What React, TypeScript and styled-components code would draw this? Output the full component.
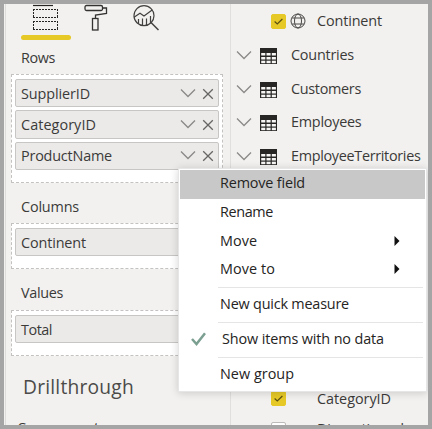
import React from 'react';
import styled, { createGlobalStyle } from 'styled-components';

const Global = createGlobalStyle`
  * { box-sizing: border-box; }
  body { margin: 0; overflow: hidden; background: #a5a5a5; }
  svg { display: block; flex: none; }
`;

const Frame = styled.div`
  position: relative;
  width: 432px;
  height: 429px;
  border: 4px solid #a5a5a5;
  background: #f2f1ef;
  color: #3b3a39;
  font: 14.4px/20px 'Open Sans', 'Noto Sans', sans-serif;
  overflow: hidden;
`;
const Panels = styled.div`
  display: grid;
  grid-template-columns: 226px 198px;
  height: 421px;
  overflow: hidden;
`;
const FormatPane = styled.section`
  border-left: 1px solid #f2f1ef;
  box-shadow: inset 1px 0 #dddcdb;
  padding-left: 6px;
  overflow: hidden;
`;
const FieldsPane = styled.section`
  border-left: 1px solid #e0dfdd;
  overflow: hidden;
`;
const Label = styled.span<{ $w: number; $size?: number }>`
  display: block;
  width: ${p => p.$w}px;
  font-size: ${p => p.$size ?? 14.4}px;
  white-space: nowrap;
`;
const TabBar = styled.div`
  display: flex;
  gap: 14px;
  height: 42px;
  padding-left: 10px;
`;
const Tab = styled.div<{ $active?: boolean }>`
  width: 36px;
  height: 36px;
  display: flex;
  justify-content: center;
  position: relative;
  &:first-child { width: 50px; margin-right: -7px; }
  &::after {
    content: '';
    display: ${p => (p.$active ? 'block' : 'none')};
    position: absolute;
    left: 0;
    bottom: 0;
    width: 50px;
    height: 5px;
    border-radius: 3px;
    background: #e6c927;
  }
`;
const Heading = styled.div<{ $h: number; $top: number }>`
  height: ${p => p.$h}px;
  padding: ${p => p.$top}px 0 0 10px;
`;
const Well = styled.div<{ $h: number }>`
  display: flex;
  flex-direction: column;
  gap: 3px;
  width: 212px;
  height: ${p => p.$h}px;
  padding: 4px 3px;
  border: 1px dashed #c3c2c1;
  background: #fff;
`;
const Pill = styled.div`
  display: flex;
  align-items: center;
  height: 28.4px;
  flex: none;
  padding: 1px 4px 0 5px;
  border: 1px solid #c8c6c4;
  border-radius: 2px;
  background: #ebeae9;
`;
const PillActions = styled.div`
  display: flex;
  gap: 6px;
  margin-left: auto;
`;
const Drill = styled.div`
  padding: 18px 0 0 12px;
  height: 57px;
  color: #4b4a49;
  font-weight: 500;
  line-height: 26px;
`;
const CrossReport = styled.div`
  padding: 5px 0 0 6px;
`;
const TableRow = styled.div`
  display: flex;
  align-items: center;
  height: 33.7px;
  padding-left: 5px;
  svg { opacity: 0.99; }
`;
const TableGlyph = styled.div`
  margin: 2px 14px 0 8px;
`;
const FieldRow = styled.div<{ $h: number }>`
  display: flex;
  align-items: center;
  height: ${p => p.$h}px;
  padding-left: 40px;
`;
const Check = styled.div<{ $on?: boolean }>`
  display: grid;
  place-items: center;
  width: 15px;
  height: 15px;
  border-radius: 2px;
  background: ${p => (p.$on ? '#e6c927' : '#fff')};
  border: 1px solid ${p => (p.$on ? '#e6c927' : '#bdbbb9')};
`;
const KindSlot = styled.div`
  width: 31px;
  padding-left: 4px;
`;
const HiddenFields = styled.div`
  height: 209px;
`;
const Menu = styled.div`
  position: absolute;
  left: 174px;
  top: 164px;
  width: 249px;
  height: 224px;
  padding: 1px;
  border: 1px solid #e6e6e6;
  background: #fff;
  color: #252423;
  box-shadow: 0 1px 8px rgba(0, 0, 0, 0.17);
`;
const MenuItem = styled.div<{ $active?: boolean; $h?: number; $indent?: number }>`
  display: flex;
  align-items: center;
  height: ${p => p.$h ?? 28.7}px;
  padding: 0 25px 2px ${p => p.$indent ?? 40}px;
  background: ${p => (p.$active ? '#c8c8c8' : 'transparent')};
  svg { margin-left: auto; }
`;
const Divider = styled.div`
  height: 1px;
  margin: 2px 2px 2px 38px;
  background: #e5e5e5;
`;
const TickSlot = styled.div`
  width: 31px;
  svg { margin: 0; }
`;

/* Fits a run of text to its design width regardless of the face's metrics. */
function Text({ children, w, size }: { children: string; w: number; size?: number }) {
  const ref = React.useRef<HTMLSpanElement>(null);
  const [spacing, setSpacing] = React.useState(0);
  React.useLayoutEffect(() => {
    const range = document.createRange();
    range.selectNodeContents(ref.current!);
    setSpacing((w - range.getBoundingClientRect().width) / children.length);
  }, [children, w, size]);
  return <Label ref={ref} $w={w} $size={size} style={{ letterSpacing: spacing }}>{children}</Label>;
}

const Chevron = () => (
  <svg width="16" height="10" viewBox="0 0 16 10" fill="none" stroke="#8a8987" strokeWidth="1.3">
    <path d="M1 1.5 8 8.5 15 1.5" />
  </svg>
);
const Cross = () => (
  <svg width="12" height="12" viewBox="0 0 12 12" fill="none" stroke="#666564" strokeWidth="1.3">
    <path d="M1.2 1.2 10.8 10.8M10.8 1.2 1.2 10.8" />
  </svg>
);
const FieldsIcon = () => (
  <svg width="28" height="30" viewBox="0 0 28 30" fill="none" stroke="#252423">
    <path d="M1 1.5H21" strokeWidth="1.2" />
    <path d="M1 5.5H26M1 13.5H26M1 17.5H26M1 25.5H26" strokeDasharray="2 1" />
    <path d="M1.5 5V14M25.5 5V14M1.5 17V26M25.5 17V26" strokeDasharray="2 1" />
  </svg>
);
const RollerIcon = () => (
  <svg width="26" height="30" viewBox="0 0 26 30" fill="none" stroke="#333231" strokeWidth="1.3">
    <rect x="2" y="1.5" width="17.5" height="5" rx="1.5" />
    <path d="M19.5 4H23.5V9.5L12.5 11V14.5" />
    <rect x="9.5" y="14.5" width="5.5" height="11.5" />
  </svg>
);
const AnalyticsIcon = () => (
  <svg width="28" height="30" viewBox="0 0 28 30" fill="none" stroke="#42413f" strokeWidth="1.2">
    <circle cx="12" cy="11.7" r="10" />
    <path d="M19.2 18.8 26.5 26" strokeWidth="1.5" />
    <path d="M2 13.2 8 9.2 12 12 20.5 5.8M6.5 20V15M10.5 21.5V14.5M14.5 21.5V14.5M18.5 19V12" />
  </svg>
);
const TableIcon = () => (
  <svg width="17" height="16" viewBox="0 0 17 16">
    <rect width="17" height="16" fill="#252423" />
    <g fill="#f8f7f6">
      {[5, 9, 12.7].flatMap(y => [1.2, 6.5, 11.8].map(x => <rect key={`${x}-${y}`} x={x} y={y} width="4.1" height="2.5" />))}
    </g>
  </svg>
);
const GlobeIcon = () => (
  <svg width="16" height="16" viewBox="0 0 16 16" fill="none" stroke="#4a4948" strokeWidth="1">
    <circle cx="8" cy="8" r="7" />
    <ellipse cx="8" cy="8" rx="3.5" ry="7" />
    <path d="M1.8 5H14.2M1.8 11H14.2" />
  </svg>
);
const SmallTick = () => (
  <svg width="9" height="7" viewBox="0 0 9 7" fill="none" stroke="#5c5010" strokeWidth="1.2">
    <path d="M.6 3.5 3.3 6 8.4 1" />
  </svg>
);
const MenuTick = () => (
  <svg width="15" height="14" viewBox="0 0 15 14" fill="none" stroke="#7b9f91" strokeWidth="2.5">
    <path d="M1 7 5.5 12 14 1.2" />
  </svg>
);
const SubmenuArrow = () => (
  <svg width="6" height="10" viewBox="0 0 6 10" fill="#111"><path d="M.5 0 5.5 5 .5 10Z" /></svg>
);

function Field({ name, w }: { name: string; w: number }) {
  return (
    <Pill>
      <Text w={w}>{name}</Text>
      <PillActions><Chevron /><Cross /></PillActions>
    </Pill>
  );
}

const tables: [string, number][] = [['Countries', 63], ['Customers', 70], ['Employees', 70.5], ['EmployeeTerritories', 129.5]];

export default function App() {
  return (
    <Frame>
      <Global />
      <Panels>
        <FormatPane>
          <TabBar>
            <Tab $active><FieldsIcon /></Tab>
            <Tab><RollerIcon /></Tab>
            <Tab><AnalyticsIcon /></Tab>
          </TabBar>
          <Heading $h={28} $top={2}><Text w={34}>Rows</Text></Heading>
          <Well $h={109}>
            <Field name="SupplierID" w={69} />
            <Field name="CategoryID" w={75} />
            <Field name="ProductName" w={91} />
          </Well>
          <Heading $h={40} $top={14}><Text w={58}>Columns</Text></Heading>
          <Well $h={46}><Field name="Continent" w={65} /></Well>
          <Heading $h={41} $top={14}><Text w={42}>Values</Text></Heading>
          <Well $h={46}><Field name="Total" w={31} /></Well>
          <Drill><Text w={111} size={19.2}>Drillthrough</Text></Drill>
          <CrossReport><Text w={82}>Cross-report</Text></CrossReport>
        </FormatPane>
        <FieldsPane>
          <FieldRow $h={34}>
            <Check $on><SmallTick /></Check>
            <KindSlot><GlobeIcon /></KindSlot>
            <Text w={65}>Continent</Text>
          </FieldRow>
          {tables.map(([name, w]) => (
            <TableRow key={name}>
              <Chevron />
              <TableGlyph><TableIcon /></TableGlyph>
              <Text w={w}>{name}</Text>
            </TableRow>
          ))}
          <HiddenFields />
          <FieldRow $h={34}>
            <Check $on><SmallTick /></Check>
            <KindSlot />
            <Text w={74}>CategoryID</Text>
          </FieldRow>
          <FieldRow $h={27}>
            <Check />
            <KindSlot />
            <Text w={87}>Discontinued</Text>
          </FieldRow>
        </FieldsPane>
      </Panels>
      <Menu>
        <MenuItem $active><Text w={85}>Remove field</Text></MenuItem>
        <MenuItem><Text w={53}>Rename</Text></MenuItem>
        <MenuItem><Text w={37}>Move</Text><SubmenuArrow /></MenuItem>
        <MenuItem><Text w={55}>Move to</Text><SubmenuArrow /></MenuItem>
        <Divider />
        <MenuItem $h={30}><Text w={129}>New quick measure</Text></MenuItem>
        <Divider />
        <MenuItem $h={30} $indent={11}><TickSlot><MenuTick /></TickSlot><Text w={162}>Show items with no data</Text></MenuItem>
        <Divider />
        <MenuItem $h={30}><Text w={74}>New group</Text></MenuItem>
      </Menu>
    </Frame>
  );
}
